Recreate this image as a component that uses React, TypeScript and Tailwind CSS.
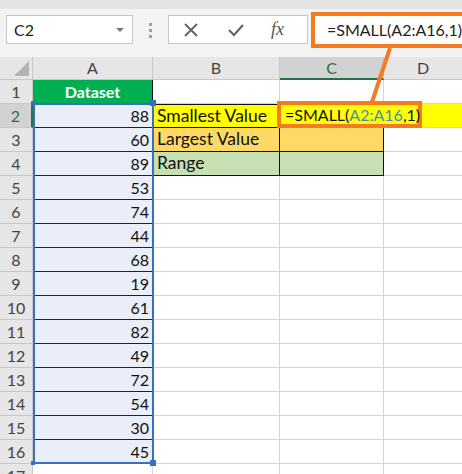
const FONT = { fontFamily: 'Lato, "Open Sans", sans-serif' }

const values = [88, 60, 89, 53, 74, 44, 68, 19, 61, 82, 49, 72, 54, 30, 45]

function Formula() {
  return (
    <span>
      =SMALL(<span className="text-[#4a8fa8]">A2:A16</span>,1)
    </span>
  )
}

function Toolbar() {
  return (
    <div className="relative h-[57px] bg-[#f3f3f3]">
      <div className="h-[9px] bg-[#e4e4e4]" />
      <div className="flex items-start pl-[6px] pt-[6px]">
        <div className="flex h-[29px] w-[127px] items-center justify-between border border-[#c6c6c6] bg-white pl-[7px] pr-[8px] text-[16px] text-[#222]">
          <span>C2</span>
          <span className="h-0 w-0 border-x-[4px] border-t-[4px] border-x-transparent border-t-[#777]" />
        </div>
        <div className="ml-[16px] mt-[8px] flex flex-col gap-[3px]">
          <span className="h-[3px] w-[3px] bg-[#a0a0a0]" />
          <span className="h-[3px] w-[3px] bg-[#a0a0a0]" />
          <span className="h-[3px] w-[3px] bg-[#a0a0a0]" />
        </div>
        <div className="ml-[16px] flex h-[29px] w-[140px] items-center border border-[#c6c6c6] bg-white text-[#555]">
          <svg width="16" height="16" viewBox="0 0 16 16" className="ml-[14px]">
            <path d="M2 2 L14 14 M14 2 L2 14" stroke="#606060" strokeWidth="1.8" />
          </svg>
          <svg width="18" height="16" viewBox="0 0 18 16" className="ml-[28px]">
            <path d="M2 8 L7 13 L16 3" stroke="#606060" strokeWidth="2" fill="none" />
          </svg>
          <span className="ml-[26px] text-[18px] italic text-[#555]" style={{ fontFamily: '"Liberation Serif", serif' }}>
            fx
          </span>
        </div>
        <div className="ml-[3px] mt-[-3px] flex h-[36px] flex-1 items-center border-[4px] border-r-0 border-[#f47b20] bg-white pl-[12px] text-[16px] text-[#222]">
          <span>=SMALL(A2:A16,1)</span>
        </div>
      </div>
    </div>
  )
}

function ColumnHeaders() {
  return (
    <div className="flex h-[23px] text-[16px] text-[#444]">
      <div className="flex w-[33px] items-end justify-end border-r border-b border-[#c8c8c8] bg-[#e6e6e6] p-[3px]">
        <svg width="15" height="15" viewBox="0 0 15 15">
          <path d="M15 0 L15 15 L0 15 Z" fill="#b4b4b4" />
        </svg>
      </div>
      <div className="flex w-[120px] items-center justify-center border-r border-b border-[#c8c8c8] bg-[#e6e6e6]">A</div>
      <div className="flex w-[127px] items-center justify-center border-r border-b border-[#c8c8c8] bg-[#e6e6e6]">B</div>
      <div className="flex w-[104px] items-center justify-center border-r border-b-[2px] border-r-[#c8c8c8] border-b-[#217346] bg-[#d2d2d2] text-[#217346]">C</div>
      <div className="flex flex-1 items-center justify-center border-b border-[#c8c8c8] bg-[#e6e6e6]">D</div>
    </div>
  )
}

function RowHead({ n, selected }: { n: number; selected?: boolean }) {
  return (
    <div
      className={
        selected
          ? 'flex w-[33px] items-center justify-center border-b border-r-[2px] border-b-[#c8c8c8] border-r-[#217346] bg-[#d2d2d2] text-[#217346]'
          : 'flex w-[33px] items-center justify-center border-b border-r border-[#c8c8c8] bg-[#e6e6e6] text-[#444]'
      }
    >
      {n}
    </div>
  )
}

const labels: Record<number, { text: string; bg: string }> = {
  2: { text: 'Smallest Value', bg: 'bg-[#ffff00]' },
  3: { text: 'Largest Value', bg: 'bg-[#ffd966]' },
  4: { text: 'Range', bg: 'bg-[#c6e0b4]' },
}

function Grid() {
  const rows = Array.from({ length: 16 }, (_, i) => i + 2)
  return (
    <div className="relative text-[16px] text-[#111]">
      <div className="flex h-[24px]">
        <RowHead n={1} />
        <div className="flex w-[120px] items-center justify-center border-r border-b border-[#111] bg-[#00b050] font-bold text-white">
          Dataset
        </div>
        <div className="w-[127px] border-r border-b border-[#d4d4d4]" />
        <div className="w-[104px] border-r border-b border-[#d4d4d4]" />
        <div className="flex-1 border-b border-[#d4d4d4]" />
      </div>
      {rows.map((r) => {
        const v = values[r - 2]
        const lab = labels[r]
        return (
          <div key={r} className="flex h-[24px]">
            <RowHead n={r} selected={r === 2} />
            {v !== undefined ? (
              <div className="flex w-[120px] items-center justify-end border-b border-[#222] bg-[#e9eef8] pr-[4px]">{v}</div>
            ) : (
              <div className="w-[120px] border-r border-b border-[#d4d4d4]" />
            )}
            {lab ? (
              <div className={`flex w-[127px] items-center border-r border-b border-[#111] pl-[4px] text-[17.5px] ${lab.bg} ${r === 2 ? 'border-t' : ''}`}>
                {lab.text}
              </div>
            ) : (
              <div className="w-[127px] border-r border-b border-[#d4d4d4]" />
            )}
            {lab ? (
              <div className={`w-[104px] border-r border-b border-[#111] ${lab.bg} ${r === 2 ? 'border-t' : ''}`} />
            ) : (
              <div className="w-[104px] border-r border-b border-[#d4d4d4]" />
            )}
            <div className={`flex-1 border-b border-[#d4d4d4] ${r === 2 ? 'bg-[#ffff00]' : ''}`} />
          </div>
        )
      })}

      {/* selection A2:A16 */}
      <div className="pointer-events-none absolute left-[33px] top-[23px] h-[361px] w-[121px] border-[2px] border-[#3a6fc0]" />
      <span className="absolute left-[31px] top-[21px] h-[4px] w-[4px] bg-[#3a6fc0]" />
      <span className="absolute left-[150px] top-[20px] h-[6px] w-[6px] bg-[#3a6fc0]" />
      <span className="absolute left-[31px] top-[381px] h-[4px] w-[4px] bg-[#3a6fc0]" />
      <span className="absolute left-[150px] top-[380px] h-[6px] w-[6px] bg-[#3a6fc0]" />

      {/* edited cell C2 */}
      <div className="absolute left-[277px] top-[21px] flex h-[27px] w-[145px] items-center border-[4px] border-[#f47b20] bg-[#ffff00] pl-[4px]">
        <Formula />
        <span className="ml-[1px] h-[17px] w-[1px] bg-black" />
      </div>
    </div>
  )
}

export default function App() {
  return (
    <div className="relative h-[474px] w-[462px] overflow-hidden bg-white" style={FONT}>
      <Toolbar />
      <ColumnHeaders />
      <Grid />
      <svg className="pointer-events-none absolute left-0 top-0" width="462" height="474">
        <line x1="390" y1="48" x2="372" y2="102" stroke="#f47b20" strokeWidth="4" />
      </svg>
    </div>
  )
}
